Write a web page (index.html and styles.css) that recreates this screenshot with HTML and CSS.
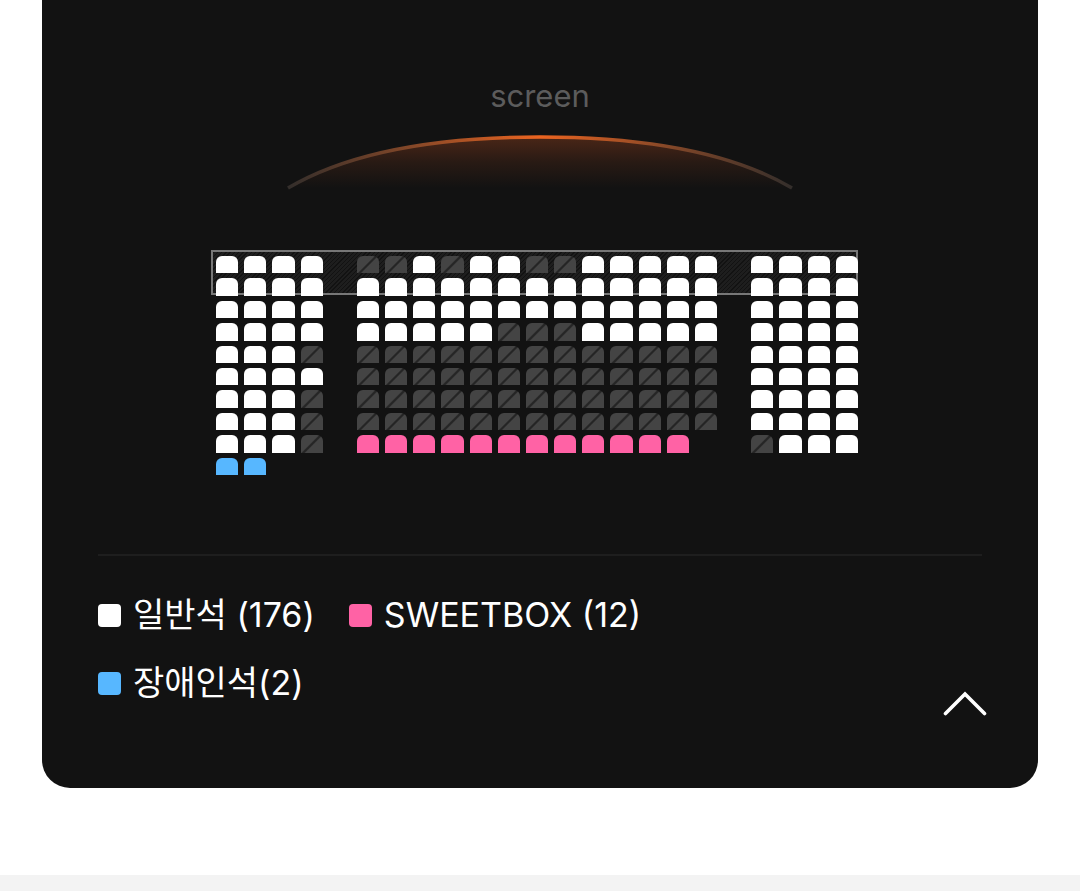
FILE: index.html
```html
<!DOCTYPE html>
<html lang="ko">
<head>
  <meta charset="UTF-8" />
  <meta name="viewport" content="width=device-width, initial-scale=1.0" />
  <title>좌석 배치도</title>
  <link rel="stylesheet" href="styles.css">
</head>
<body>

  <main class="page">
    <section class="card">
      <div class="screen">
        <span class="screen-label">screen</span>
        <svg class="screen-arc" viewBox="0 0 508 64" aria-hidden="true">
          <defs>
            <linearGradient id="arcLine" x1="0" x2="1" y1="0" y2="0">
              <stop offset="0" stop-color="#332e2b" />
              <stop offset="0.25" stop-color="#864828" />
              <stop offset="0.5" stop-color="#ec6420" />
              <stop offset="0.75" stop-color="#864828" />
              <stop offset="1" stop-color="#332e2b" />
            </linearGradient>
            <linearGradient id="arcGlow" x1="0" x2="0" y1="0" y2="1">
              <stop offset="0" stop-color="#4a2617" />
              <stop offset="0.5" stop-color="#281a14" />
              <stop offset="1" stop-color="#121212" />
            </linearGradient>
          </defs>
          <path d="M2 54 C70 14 162 3 254 3 S438 14 506 54 Z" fill="url(#arcGlow)" />
          <path d="M2 54 C70 14 162 3 254 3 S438 14 506 54" fill="none" stroke="url(#arcLine)" stroke-width="3.6" />
        </svg>
      </div>

      <div class="seat-map" id="seatMap"></div>

      <div class="bottom">
        <ul class="legend">
          <li><span class="mark normal"></span>일반석 (176)</li>
          <li><span class="mark sweet"></span>SWEETBOX (12)</li>
          <li><span class="mark disabled"></span>장애인석(2)</li>
        </ul>
        <button type="button" class="fold" aria-label="접기">
          <svg viewBox="0 0 44 26" width="44" height="26" aria-hidden="true">
            <path d="M2.5 23.5 L22 4 L41.5 23.5" fill="none" stroke="#fff" stroke-width="3.6" stroke-linecap="round" />
          </svg>
        </button>
      </div>
    </section>
  </main>

  <script>
    // w: normal, x: sold, p: sweetbox, b: wheelchair, .: aisle
    const rows = [
      'wwww.xxwxwwxxwwwww.wwww',
      'wwww.wwwwwwwwwwwww.wwww',
      'wwww.wwwwwwwwwwwww.wwww',
      'wwww.wwwwwxxxwwwww.wwww',
      'wwwx.xxxxxxxxxxxxx.wwww',
      'wwww.xxxxxxxxxxxxx.wwww',
      'wwwx.xxxxxxxxxxxxx.wwww',
      'wwwx.xxxxxxxxxxxxx.wwww',
      'wwwx.pppppppppppp..xwww',
      'bb.....................'
    ];
    const types = { w: 'normal', x: 'sold', p: 'sweet', b: 'disabled' };
    const map = document.getElementById('seatMap');

    rows.forEach(function (row) {
      for (const code of row) {
        const seat = document.createElement('span');
        if (types[code]) {
          seat.className = 'seat ' + types[code];
        }
        map.appendChild(seat);
      }
    });
  </script>

</body>
</html>
```

FILE: styles.css
```css
body {
  margin: 0;
  background: #f3f3f3;
  font-family: Inter, 'Noto Sans CJK KR', sans-serif;
}

.page {
  background: #fff;
  padding: 0 42px 87px;
}

.card {
  background: #121212;
  border-radius: 0 0 28px 28px;
  padding: 76px 56px 72px;
}

.screen {
  display: flex;
  flex-direction: column;
  align-items: center;
}

.screen-label {
  color: #5c5c5c;
  font-size: 31px;
  line-height: 40px;
}

.screen-arc {
  width: 508px;
  max-width: 100%;
  margin-top: 18px;
}

/* seats */
.seat-map {
  position: relative;
  display: grid;
  grid-template-columns: repeat(23, 1fr);
  grid-template-rows: repeat(10, 1fr);
  gap: 5px 6px;
  box-sizing: border-box;
  width: 648px;
  max-width: 100%;
  height: 219px;
  margin: 58px auto 79px;
  padding-right: 6px;
}

/* front zone behind the first two rows */
.seat-map::before {
  content: '';
  position: absolute;
  top: -6px;
  left: -5px;
  right: 6px;
  height: 41px;
  border: 2px solid #777;
  background: repeating-linear-gradient(135deg, #121212 0 1px, #1e1e1e 1px 3px);
}

.seat {
  position: relative;
  border-radius: 6px 6px 0 0;
}

.normal {
  background: #fff;
}

.sweet {
  background: #ff62a5;
}

.disabled {
  background: #57b7ff;
}

.sold {
  background: linear-gradient(135deg, #444 44%, #252525 48% 52%, #444 56%);
}

/* legend */
.bottom {
  display: flex;
  justify-content: space-between;
  align-items: flex-end;
  border-top: 2px solid #1e1e1e;
  padding-top: 35px;
}

.legend {
  display: flex;
  flex-wrap: wrap;
  gap: 20px 34px;
  max-width: 640px;
  margin: 0;
  padding: 0 0 9px;
  list-style: none;
  color: #fff;
  font-size: 34px;
  line-height: 48px;
}

.legend li {
  display: flex;
  align-items: center;
}

.mark {
  width: 23px;
  height: 23px;
  margin-right: 12px;
  border-radius: 4px;
}

.fold {
  display: flex;
  margin: 0 -5px 0 0;
  padding: 0;
  border: none;
  background: none;
  cursor: pointer;
}
```
